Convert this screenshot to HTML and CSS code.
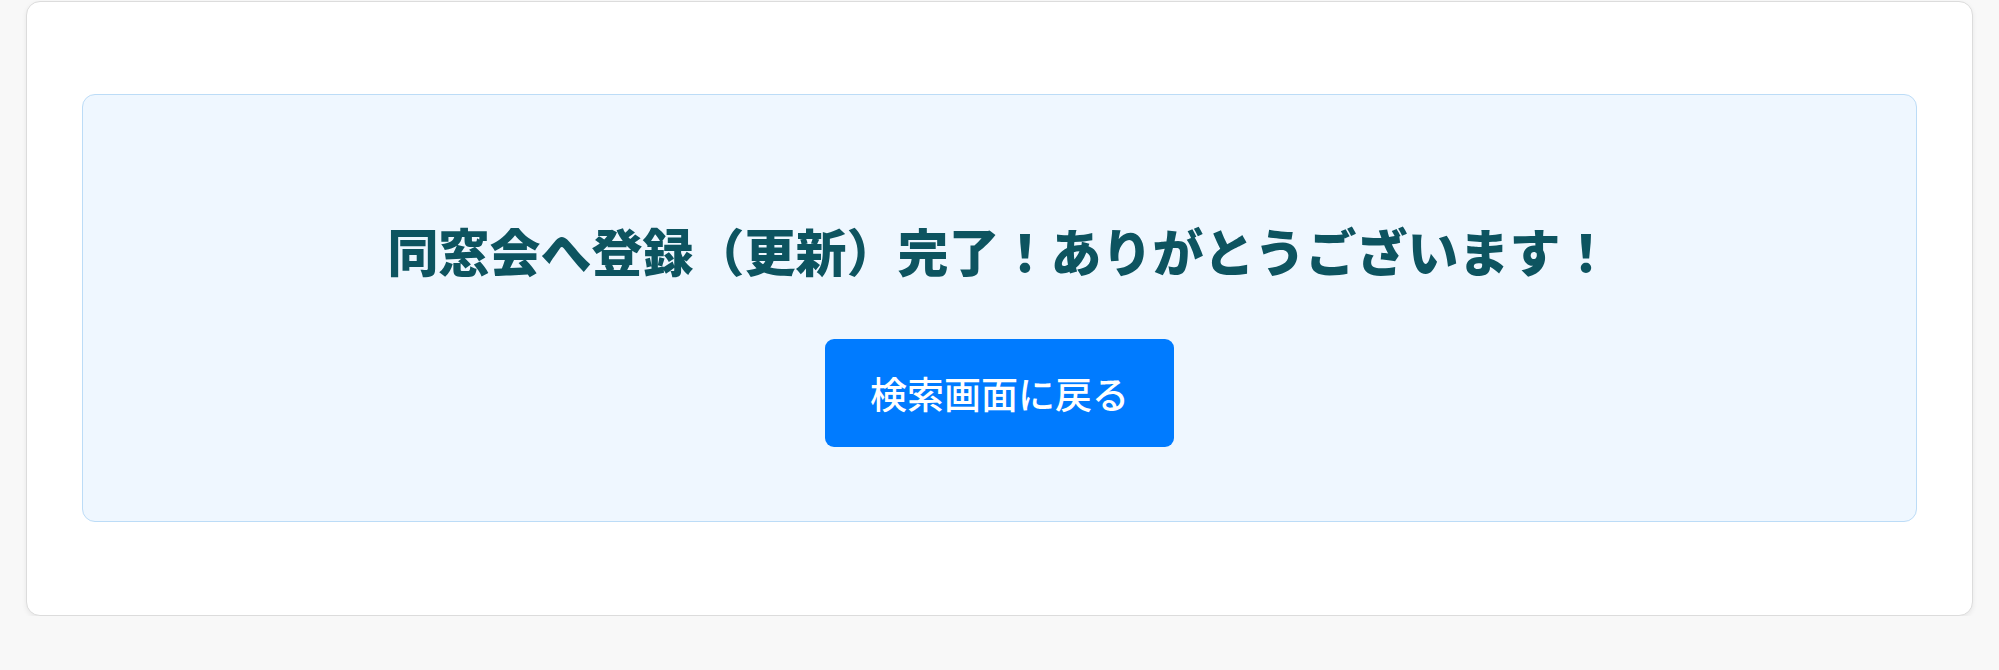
FILE: index.html
```html
<!DOCTYPE html>
<html lang="ja">
<head>
<meta charset="utf-8">
<title>登録完了</title>
<link rel="stylesheet" href="styles.css">
</head>
<body>
<div class="card">
  <div class="notice">
    <h1 class="notice-title">同窓会へ登録（更新）完了！ありがとうございます！</h1>
    <a class="btn-back" href="#">検索画面に戻る</a>
  </div>
</div>
</body>
</html>
```

FILE: styles.css
```css
html, body {
  margin: 0;
  padding: 0;
  background: #f8f8f8;
  font-family: "Noto Sans CJK JP", "Noto Sans", sans-serif;
}

body {
  padding-top: 1px;
}

.card {
  width: 1947px;
  box-sizing: border-box;
  margin: 0 auto;
  background: #ffffff;
  border: 1px solid #dcdcdc;
  border-radius: 14px;
  box-shadow: 0 2px 5px rgba(0, 0, 0, 0.07);
  padding: 92px 55px 93px 55px;
}

.notice {
  background: #eff7ff;
  border: 1px solid #bcdcf7;
  border-radius: 13px;
  padding: 125px 20px 74px;
  display: flex;
  flex-direction: column;
  align-items: center;
}

.notice-title {
  margin: 0;
  font-size: 51px;
  line-height: 60px;
  font-weight: 900;
  color: #0d5460;
  text-align: center;
}

.btn-back {
  margin-top: 59px;
  display: inline-flex;
  align-items: center;
  justify-content: center;
  width: 349px;
  height: 108px;
  box-sizing: border-box;
  background: #007bff;
  color: #ffffff;
  font-size: 37px;
  font-weight: 500;
  border-radius: 9px;
  text-decoration: none;
}
```
